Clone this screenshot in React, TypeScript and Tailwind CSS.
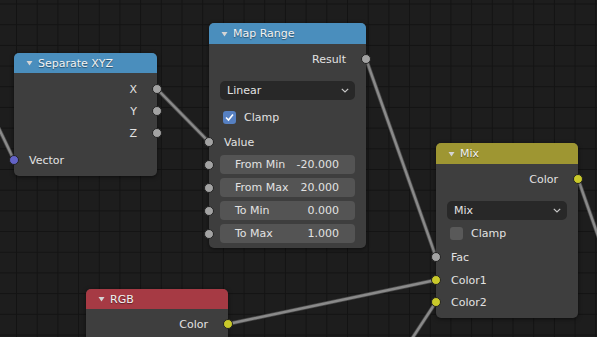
import React from 'react';
import clsx from 'clsx';

type SocketColor = 'gray' | 'yellow' | 'blue';

const socketColors: Record<SocketColor, string> = {
    gray: 'bg-[#a3a3a3]',
    yellow: 'bg-[#c9c92a]',
    blue: 'bg-[#6363c7]',
};

const Socket = ({ side, color }: { side: 'left' | 'right'; color: SocketColor }) => (
    <span
        className={clsx(
            'absolute top-1/2 -translate-y-1/2 w-[10px] h-[10px] rounded-full border border-[#222] z-10',
            side === 'left' ? '-left-[5px]' : '-right-[5px]',
            socketColors[color],
        )}
    />
);

const Triangle = () => (
    <svg width="7" height="6" viewBox="0 0 7 6" className="shrink-0">
        <polygon points="0.5,1 6.5,1 3.5,5.5" fill="#d4d4d4" />
    </svg>
);

const Chevron = () => (
    <svg width="8" height="5" viewBox="0 0 8 5" className="shrink-0">
        <polyline points="0.8,0.8 4,4 7.2,0.8" fill="none" stroke="#c8c8c8" strokeWidth="1.2" />
    </svg>
);

interface NodeProps {
    title: string;
    pos: string;
    header: string;
    children: React.ReactNode;
}

const Node = ({ title, pos, header, children }: NodeProps) => (
    <div className={clsx('absolute rounded-[5px] bg-[#3e3e3e] shadow-[0_1px_4px_rgba(0,0,0,0.55)]', pos)}>
        <div className={clsx('flex items-center gap-[5px] pl-[12px] rounded-t-[5px] text-[#f2f2f2] [text-shadow:0_1px_1px_rgba(0,0,0,0.45)]', header)}>
            <Triangle />
            <span>{title}</span>
        </div>
        {children}
    </div>
);

const OutRow = ({ label, color = 'gray' }: { label: string; color?: SocketColor }) => (
    <div className="relative flex items-center justify-end h-[22px] pr-[20px]">
        <span>{label}</span>
        <Socket side="right" color={color} />
    </div>
);

const InRow = ({ label, color = 'gray', className }: { label: string; color?: SocketColor; className?: string }) => (
    <div className={clsx('relative flex items-center h-[22px] pl-[15px]', className)}>
        <span>{label}</span>
        <Socket side="left" color={color} />
    </div>
);

const Dropdown = ({ label, className }: { label: string; className?: string }) => (
    <div className={clsx('flex items-center justify-between h-[19px] mx-[11px] pl-[7px] pr-[6px] rounded-[5px] bg-[#282828]', className)}>
        <span>{label}</span>
        <Chevron />
    </div>
);

const Checkbox = ({ checked, className }: { checked: boolean; className?: string }) => (
    <div className={clsx('flex items-center gap-[8px] h-[22px] pl-[14px]', className)}>
        <span
            className={clsx(
                'flex items-center justify-center w-[13px] h-[13px] rounded-[3px]',
                checked ? 'bg-[#5680c2]' : 'bg-[#595959]',
            )}
        >
            {checked && (
                <svg width="11" height="11" viewBox="0 0 11 11">
                    <polyline points="2,5.5 4.5,8 9,2.5" fill="none" stroke="#ffffff" strokeWidth="1.6" />
                </svg>
            )}
        </span>
        <span>Clamp</span>
    </div>
);

const NumberField = ({ label, value }: { label: string; value: string }) => (
    <div className="relative flex items-center h-[19px] px-[11px]">
        <div className="flex flex-1 items-center justify-between h-full pl-[15px] pr-[16px] rounded-[4px] bg-[#545454]">
            <span>{label}</span>
            <span>{value}</span>
        </div>
        <Socket side="left" color="gray" />
    </div>
);

const fields = [
    { label: 'From Min', value: '-20.000' },
    { label: 'From Max', value: '20.000' },
    { label: 'To Min', value: '0.000' },
    { label: 'To Max', value: '1.000' },
];

// socket to socket, straight lines like the reference
const wires: [number, number, number, number][] = [
    [-20, 89, 14, 160],
    [157, 89, 209, 142],
    [366, 59, 436, 257],
    [228, 324, 436, 280],
    [398, 360, 436, 302],
    [578, 179, 620, 298],
];

const App = () => {
    return (
        <div className="relative w-[597px] h-[337px] overflow-hidden bg-[#1d1d1d] bg-[linear-gradient(to_right,#131313_1px,transparent_1px),linear-gradient(to_bottom,#131313_1px,transparent_1px)] bg-[size:20.7px_20.7px] bg-[position:16px_3.5px] font-['DejaVu_Sans',sans-serif] text-[11px] text-[#e2e2e2] leading-none">
            <svg className="absolute inset-0" width="597" height="337">
                {wires.map(([x1, y1, x2, y2], i) => (
                    <g key={i}>
                        <line x1={x1} y1={y1} x2={x2} y2={y2} stroke="#4a4a4a" strokeWidth="4" />
                        <line x1={x1} y1={y1} x2={x2} y2={y2} stroke="#8a8a8a" strokeWidth="2.4" />
                    </g>
                ))}
            </svg>

            <Node title="Separate XYZ" pos="left-[14px] top-[53px] w-[143px]" header="h-[20px] bg-[#4a8ebd]">
                <div className="flex flex-col py-[5px]">
                    <OutRow label="X" />
                    <OutRow label="Y" />
                    <OutRow label="Z" />
                    <InRow label="Vector" color="blue" className="mt-[5px]" />
                </div>
            </Node>

            <Node title="Map Range" pos="left-[209px] top-[23px] w-[157px]" header="h-[21px] bg-[#4a8ebd]">
                <div className="flex flex-col pt-[4px] pb-[5px]">
                    <OutRow label="Result" />
                    <Dropdown label="Linear" className="mt-[11px]" />
                    <Checkbox checked className="mt-[6px]" />
                    <InRow label="Value" className="mt-[3px]" />
                    <div className="flex flex-col gap-[4px] mt-[2px]">
                        {fields.map((f) => (
                            <NumberField key={f.label} label={f.label} value={f.value} />
                        ))}
                    </div>
                </div>
            </Node>

            <Node title="Mix" pos="left-[436px] top-[143px] w-[142px]" header="h-[21px] bg-[#9e9632]">
                <div className="flex flex-col pt-[4px] pb-[5px]">
                    <OutRow label="Color" color="yellow" />
                    <Dropdown label="Mix" className="mt-[11px]" />
                    <Checkbox checked={false} className="mt-[2px]" />
                    <InRow label="Fac" className="mt-[2px]" />
                    <InRow label="Color1" color="yellow" className="mt-[1px]" />
                    <InRow label="Color2" color="yellow" />
                </div>
            </Node>

            <Node title="RGB" pos="left-[86px] top-[289px] w-[142px]" header="h-[20px] bg-[#a63a44]">
                <div className="flex flex-col pt-[4px] pb-[60px]">
                    <OutRow label="Color" color="yellow" />
                </div>
            </Node>
        </div>
    );
};

export default App;
